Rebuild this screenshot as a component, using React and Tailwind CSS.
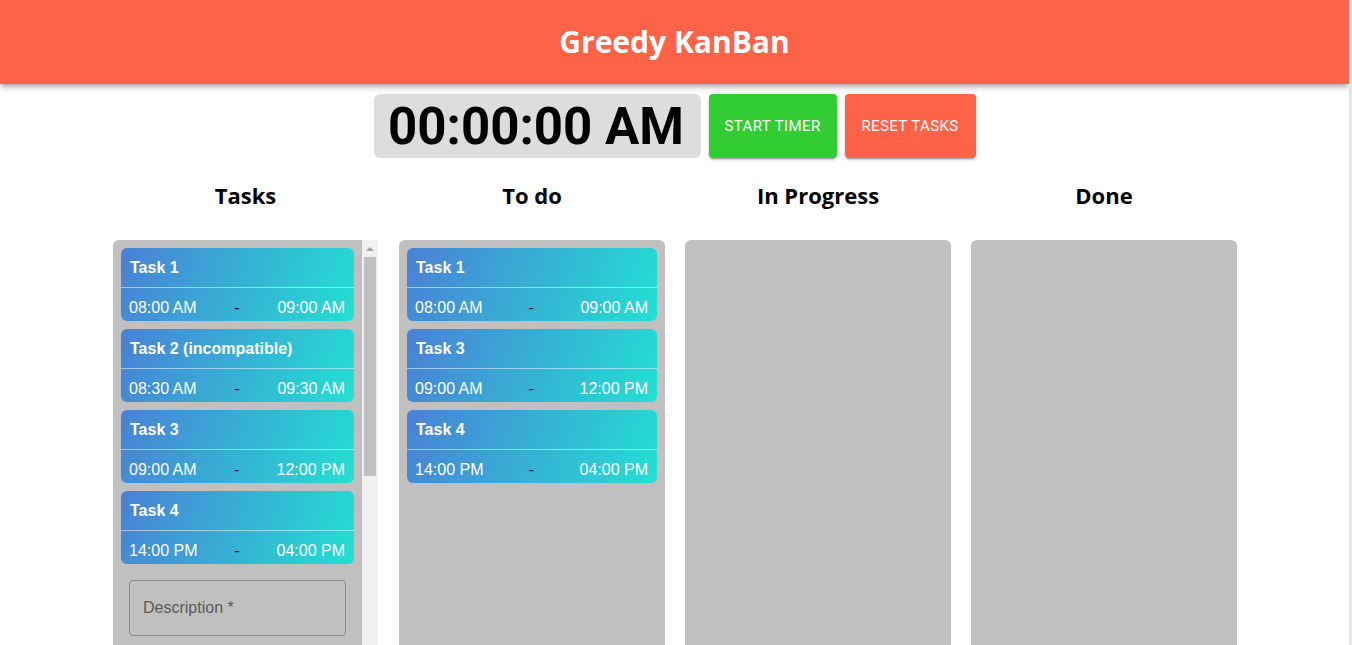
import React from 'react';

const tasks = [
  { title: 'Task 1', start: '08:00 AM', end: '09:00 AM' },
  { title: 'Task 2 (incompatible)', start: '08:30 AM', end: '09:30 AM' },
  { title: 'Task 3', start: '09:00 AM', end: '12:00 PM' },
  { title: 'Task 4', start: '14:00 PM', end: '04:00 PM' },
];

const todo = [tasks[0], tasks[2], tasks[3]];

const TaskCard = ({ task }) => (
  <div className="shrink-0 rounded-md bg-linear-[110deg] from-[#4a80d6] to-[#22e0d3] text-white font-['Liberation_Sans',Arial,sans-serif]">
    <div className="h-10 flex items-center pl-[9px] text-base font-bold border-b border-white/50">
      {task.title}
    </div>
    <div className="h-[33px] flex items-center justify-between pl-2 pr-[9px] text-base pt-[6px]">
      <span>{task.start}</span>
      <span className="text-black">-</span>
      <span>{task.end}</span>
    </div>
  </div>
);

const Heading = ({ children }) => (
  <div className="shrink-0 h-[82px] pb-[8px] flex items-center justify-center text-[22px] font-bold text-black font-['Open_Sans',sans-serif]">
    {children}
  </div>
);

export default function App() {
  return (
    <div className="flex h-[645px] overflow-hidden bg-white">
      <div className="flex-1 flex flex-col">
        <header className="shrink-0 h-[84px] bg-[#ff6347] flex items-center justify-center shadow-[0_2px_4px_-1px_rgba(0,0,0,0.2),0_4px_5px_0_rgba(0,0,0,0.14),0_1px_10px_0_rgba(0,0,0,0.12)]">
          <h1 className="text-white text-[30px] font-bold font-['Open_Sans',sans-serif] pb-[1px]">Greedy KanBan</h1>
        </header>

        <div className="shrink-0 flex justify-center gap-2 mt-[10px] font-['Roboto',sans-serif]">
          <div className="h-16 w-[327px] bg-[#dddddd] rounded-md flex items-center justify-center text-[51px] font-bold text-black leading-none pr-[2px]">
            00:00:00 AM
          </div>
          <button className="h-16 w-[128px] bg-[#32cd32] text-white text-[15px] tracking-[0.4px] uppercase rounded shadow-[0_3px_1px_-2px_rgba(0,0,0,0.2),0_2px_2px_0_rgba(0,0,0,0.14),0_1px_5px_0_rgba(0,0,0,0.12)]">
            Start Timer
          </button>
          <button className="h-16 w-[131px] bg-[#ff6347] text-white text-[15px] tracking-[0.4px] uppercase rounded shadow-[0_3px_1px_-2px_rgba(0,0,0,0.2),0_2px_2px_0_rgba(0,0,0,0.14),0_1px_5px_0_rgba(0,0,0,0.12)]">
            Reset Tasks
          </button>
        </div>

        <div className="shrink-0 flex justify-center gap-5 pl-px">
          <div className="w-[265px] flex flex-col">
            <Heading>Tasks</Heading>
            <div className="flex h-[420px] rounded-tl-md overflow-hidden">
              <div className="w-[249px] bg-[#c0c0c0] flex flex-col gap-2 p-2">
                {tasks.map((t) => (
                  <TaskCard key={t.title} task={t} />
                ))}
                <div className="shrink-0 mx-2 mt-2 h-14 border border-[#8c8c8c] rounded flex items-center px-[13px] text-base text-[#5a5a5a] font-['Liberation_Sans',Arial,sans-serif]">
                  Description *
                </div>
              </div>
              <div className="w-4 bg-[#f1f1f1] flex flex-col items-center">
                <div className="h-[17px] flex items-center justify-center">
                  <div className="w-0 h-0 border-l-[4px] border-r-[4px] border-b-[4px] border-l-transparent border-r-transparent border-b-[#a3a3a3]"></div>
                </div>
                <div className="w-3 h-[219px] bg-[#c1c1c1]"></div>
              </div>
            </div>
          </div>

          <div className="w-[266px] flex flex-col ml-px">
            <Heading>To do</Heading>
            <div className="h-[420px] bg-[#c0c0c0] rounded-md flex flex-col gap-2 p-2">
              {todo.map((t) => (
                <TaskCard key={t.title} task={t} />
              ))}
            </div>
          </div>

          <div className="w-[266px] flex flex-col">
            <Heading>In Progress</Heading>
            <div className="h-[420px] bg-[#c0c0c0] rounded-md"></div>
          </div>

          <div className="w-[266px] flex flex-col">
            <Heading>Done</Heading>
            <div className="h-[420px] bg-[#c0c0c0] rounded-md"></div>
          </div>
        </div>
      </div>
      <div className="w-[3px] bg-[#e6e6e6]"></div>
    </div>
  );
}
